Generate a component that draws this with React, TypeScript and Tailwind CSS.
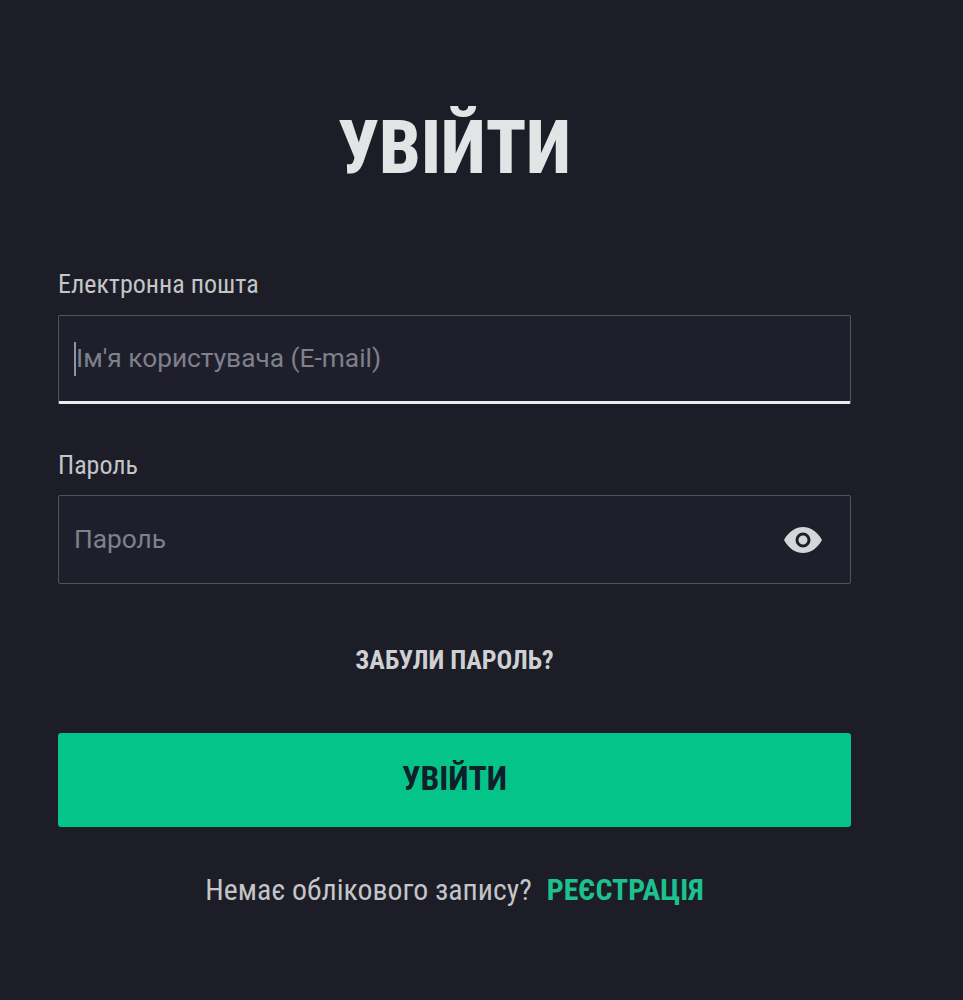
import React from "react";

const font = "font-['Roboto','Liberation_Sans',sans-serif]";

export default function App() {
  return (
    <div className={`min-h-[1000px] w-full bg-[#1c1d27] ${font} [font-stretch:condensed]`}>
      <div className="ml-[58px] flex w-[793px] flex-col pt-[107px]">
        <h1 className="mt-px -mb-px text-center text-[74px] font-extrabold leading-[80px] text-[#e3e4e6]">УВІЙТИ</h1>

        <label className="-translate-y-px mt-[83px] text-[26px] leading-[30px] text-[#c4c5c8]">Електронна пошта</label>
        <div className="mt-[15px] flex h-[89px] items-center rounded-[2px] border border-[#52535f] border-b-[3px] border-b-[#ececee] bg-[#1f1f2c] pl-[15px]">
          <span className="h-[34px] w-[2px] bg-[#8f93a3]" />
          <span className="text-[26.300px] text-[#7e808c] [font-stretch:normal]">Ім'я користувача (E-mail)</span>
        </div>

        <label className="mt-[46px] text-[26px] leading-[30px] text-[#c4c5c8]">Пароль</label>
        <div className="mt-[15px] flex h-[89px] items-center justify-between rounded-[2px] border border-[#52535f] bg-[#1f1f2c] pl-[15px] pr-[27px]">
          <span className="text-[26.300px] text-[#7e808c] [font-stretch:normal]">Пароль</span>
          <svg width="40" height="28" viewBox="0 0 40 28" aria-hidden="true">
            <path
              fillRule="evenodd"
              fill="#d5d6d9"
              d="M1 14C6 5 13 1 20 1s14 4 19 13c-5 9-12 13-19 13S6 23 1 14Zm19 7.500a7.500 7.500 0 1 0 0-15 7.500 7.500 0 0 0 0 15Zm0-3a4.500 4.500 0 1 1 0-9 4.500 4.500 0 0 1 0 9Z"
            />
          </svg>
        </div>

        <p className="mt-[61px] text-center text-[26px] font-bold leading-[30px] text-[#cfd0d3]">ЗАБУЛИ ПАРОЛЬ?</p>

        <button className="mt-[58px] h-[94px] rounded-[3px] bg-[#04c48a] text-[33.500px] font-bold text-[#10202a]">
          <span className="relative -top-px">УВІЙТИ</span>
        </button>

        <p className="-translate-y-px mt-[47px] flex justify-center gap-[15px] text-[29.800px] leading-[34px] text-[#c4c5c8]">
          <span>Немає облікового запису?</span>
          <span className="font-bold text-[#1cc18d]">РЕЄСТРАЦІЯ</span>
        </p>
      </div>
    </div>
  );
}
